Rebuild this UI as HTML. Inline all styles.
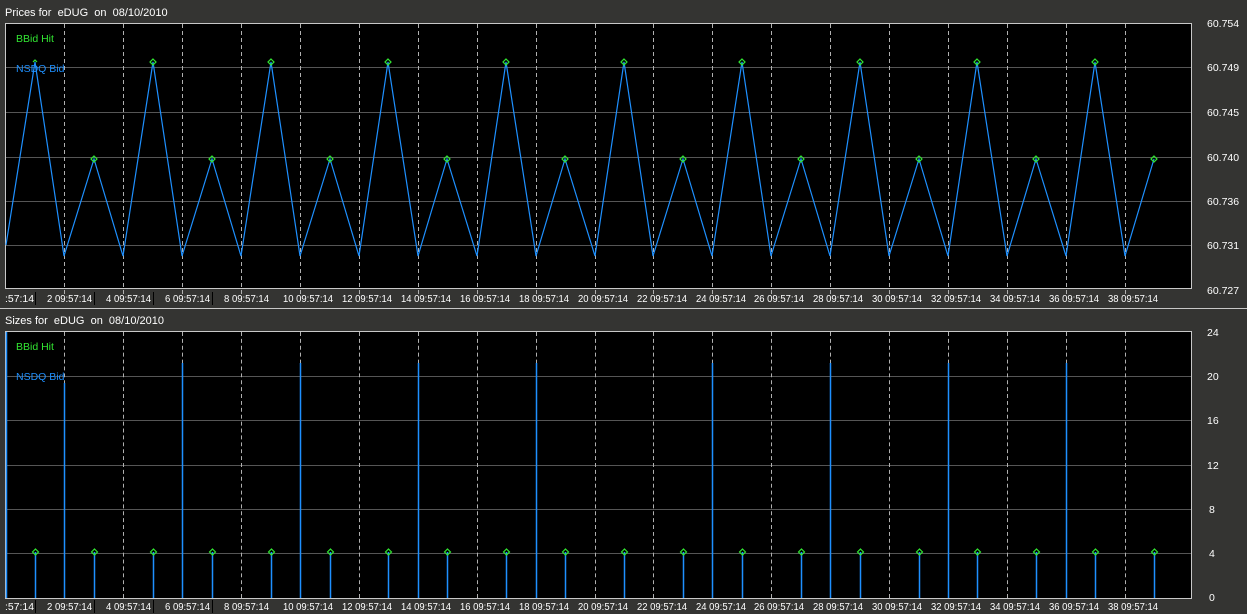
<!DOCTYPE html>
<html><head><meta charset="utf-8"><style>
html,body{margin:0;padding:0;background:#343432;}
svg{display:block;font-family:"Liberation Sans",sans-serif;}
text{white-space:pre;}
</style></head><body>
<svg width="1247" height="614" viewBox="0 0 1247 614" xmlns="http://www.w3.org/2000/svg" xml:space="preserve">
<defs>
<g id="vg" stroke="#b0b0b0" stroke-width="1" stroke-dasharray="4,3">
<line x1="64.5" y1="0" x2="64.5" y2="270"/><line x1="123.5" y1="0" x2="123.5" y2="270"/><line x1="182.5" y1="0" x2="182.5" y2="270"/><line x1="241.5" y1="0" x2="241.5" y2="270"/><line x1="300.5" y1="0" x2="300.5" y2="270"/><line x1="359.5" y1="0" x2="359.5" y2="270"/><line x1="418.5" y1="0" x2="418.5" y2="270"/><line x1="477.5" y1="0" x2="477.5" y2="270"/><line x1="536.5" y1="0" x2="536.5" y2="270"/><line x1="595.5" y1="0" x2="595.5" y2="270"/><line x1="653.5" y1="0" x2="653.5" y2="270"/><line x1="712.5" y1="0" x2="712.5" y2="270"/><line x1="771.5" y1="0" x2="771.5" y2="270"/><line x1="830.5" y1="0" x2="830.5" y2="270"/><line x1="889.5" y1="0" x2="889.5" y2="270"/><line x1="948.5" y1="0" x2="948.5" y2="270"/><line x1="1007.5" y1="0" x2="1007.5" y2="270"/><line x1="1066.5" y1="0" x2="1066.5" y2="270"/><line x1="1125.5" y1="0" x2="1125.5" y2="270"/>
</g>
<g id="xl" fill="#fff" font-size="10">
<text x="5" y="0" textLength="29" lengthAdjust="spacingAndGlyphs">:57:14</text><text x="47" y="0" textLength="45" lengthAdjust="spacingAndGlyphs">2 09:57:14</text><text x="106" y="0" textLength="45" lengthAdjust="spacingAndGlyphs">4 09:57:14</text><text x="165" y="0" textLength="45" lengthAdjust="spacingAndGlyphs">6 09:57:14</text><text x="224" y="0" textLength="45" lengthAdjust="spacingAndGlyphs">8 09:57:14</text><text x="283" y="0" textLength="50" lengthAdjust="spacingAndGlyphs">10 09:57:14</text><text x="342" y="0" textLength="50" lengthAdjust="spacingAndGlyphs">12 09:57:14</text><text x="401" y="0" textLength="50" lengthAdjust="spacingAndGlyphs">14 09:57:14</text><text x="460" y="0" textLength="50" lengthAdjust="spacingAndGlyphs">16 09:57:14</text><text x="519" y="0" textLength="50" lengthAdjust="spacingAndGlyphs">18 09:57:14</text><text x="578" y="0" textLength="50" lengthAdjust="spacingAndGlyphs">20 09:57:14</text><text x="637" y="0" textLength="50" lengthAdjust="spacingAndGlyphs">22 09:57:14</text><text x="696" y="0" textLength="50" lengthAdjust="spacingAndGlyphs">24 09:57:14</text><text x="754" y="0" textLength="50" lengthAdjust="spacingAndGlyphs">26 09:57:14</text><text x="813" y="0" textLength="50" lengthAdjust="spacingAndGlyphs">28 09:57:14</text><text x="872" y="0" textLength="50" lengthAdjust="spacingAndGlyphs">30 09:57:14</text><text x="931" y="0" textLength="50" lengthAdjust="spacingAndGlyphs">32 09:57:14</text><text x="990" y="0" textLength="50" lengthAdjust="spacingAndGlyphs">34 09:57:14</text><text x="1049" y="0" textLength="50" lengthAdjust="spacingAndGlyphs">36 09:57:14</text><text x="1108" y="0" textLength="50" lengthAdjust="spacingAndGlyphs">38 09:57:14</text>
</g>
</defs>
<rect width="1247" height="614" fill="#343432"/>
<!-- top panel -->
<text x="5" y="16" fill="#fff" font-size="11">Prices for  eDUG  on  08/10/2010</text>
<rect x="5.5" y="23.5" width="1186" height="265" fill="#000" stroke="#c8c8c8"/>
<g stroke="#555" stroke-width="1">
<line x1="6" y1="67.5" x2="1191" y2="67.5"/><line x1="6" y1="112.5" x2="1191" y2="112.5"/><line x1="6" y1="157.5" x2="1191" y2="157.5"/><line x1="6" y1="201.5" x2="1191" y2="201.5"/><line x1="6" y1="245.5" x2="1191" y2="245.5"/>
</g>
<use href="#vg" transform="translate(0,24)"/>
<polyline fill="none" stroke="#1e90ff" stroke-width="1.2" points="6,245 35,62 64,256 94,159 123,256 153,62 182,256 212,159 241,256 271,62 300,256 330,159 359,256 388,62 418,256 447,159 477,256 506,62 536,256 565,159 595,256 624,62 653,256 683,159 712,256 742,62 771,256 801,159 830,256 860,62 889,256 919,159 948,256 977,62 1007,256 1036,159 1066,256 1095,62 1125,256 1154,159"/>
<g fill="none" stroke="#32e632" stroke-width="1.2">
<polygon points="94,156 97,159 94,162 91,159"/><polygon points="153,59 156,62 153,65 150,62"/><polygon points="212,156 215,159 212,162 209,159"/><polygon points="271,59 274,62 271,65 268,62"/><polygon points="330,156 333,159 330,162 327,159"/><polygon points="388,59 391,62 388,65 385,62"/><polygon points="447,156 450,159 447,162 444,159"/><polygon points="506,59 509,62 506,65 503,62"/><polygon points="565,156 568,159 565,162 562,159"/><polygon points="624,59 627,62 624,65 621,62"/><polygon points="683,156 686,159 683,162 680,159"/><polygon points="742,59 745,62 742,65 739,62"/><polygon points="801,156 804,159 801,162 798,159"/><polygon points="860,59 863,62 860,65 857,62"/><polygon points="919,156 922,159 919,162 916,159"/><polygon points="977,59 980,62 977,65 974,62"/><polygon points="1036,156 1039,159 1036,162 1033,159"/><polygon points="1095,59 1098,62 1095,65 1092,62"/><polygon points="1154,156 1157,159 1154,162 1151,159"/>
<polyline points="33,62 35,60 37,62"/>
</g>
<text x="16" y="42" fill="#32e632" font-size="10.5">BBid Hit</text>
<text x="16" y="72" fill="#1e90ff" font-size="10.5">NSDQ Bid</text>
<g fill="#fff" font-size="10.5">
<text x="1207" y="27">60.754</text><text x="1207" y="71">60.749</text><text x="1207" y="116">60.745</text><text x="1207" y="161">60.740</text><text x="1207" y="205">60.736</text><text x="1207" y="249">60.731</text><text x="1207" y="294">60.727</text>
</g>
<use href="#xl" transform="translate(0,302)"/>
<g stroke="#000"><line x1="35.5" y1="292" x2="35.5" y2="305"/><line x1="94.5" y1="292" x2="94.5" y2="305"/><line x1="153.5" y1="292" x2="153.5" y2="305"/><line x1="212.5" y1="292" x2="212.5" y2="305"/></g>
<line x1="0" y1="308.5" x2="1247" y2="308.5" stroke="#c8c8c8"/>
<!-- bottom panel -->
<text x="5" y="324" fill="#fff" font-size="11">Sizes for  eDUG  on  08/10/2010</text>
<rect x="5.5" y="331.5" width="1186" height="267" fill="#000" stroke="#c8c8c8"/>
<g stroke="#555" stroke-width="1">
<line x1="6" y1="376.5" x2="1191" y2="376.5"/><line x1="6" y1="420.5" x2="1191" y2="420.5"/><line x1="6" y1="465.5" x2="1191" y2="465.5"/><line x1="6" y1="509.5" x2="1191" y2="509.5"/><line x1="6" y1="553.5" x2="1191" y2="553.5"/>
</g>
<use href="#vg" transform="translate(0,332) scale(1,0.985)"/>
<g stroke="#1e90ff" stroke-width="1.5">
<line x1="6.5" y1="332" x2="6.5" y2="598"/><line x1="64.5" y1="383" x2="64.5" y2="598"/><line x1="182.5" y1="363" x2="182.5" y2="598"/><line x1="300.5" y1="363" x2="300.5" y2="598"/><line x1="418.5" y1="363" x2="418.5" y2="598"/><line x1="536.5" y1="363" x2="536.5" y2="598"/><line x1="712.5" y1="363" x2="712.5" y2="598"/><line x1="830.5" y1="363" x2="830.5" y2="598"/><line x1="948.5" y1="363" x2="948.5" y2="598"/><line x1="1066.5" y1="363" x2="1066.5" y2="598"/>
<line x1="35.5" y1="552" x2="35.5" y2="598"/><line x1="94.5" y1="552" x2="94.5" y2="598"/><line x1="153.5" y1="552" x2="153.5" y2="598"/><line x1="212.5" y1="552" x2="212.5" y2="598"/><line x1="271.5" y1="552" x2="271.5" y2="598"/><line x1="330.5" y1="552" x2="330.5" y2="598"/><line x1="388.5" y1="552" x2="388.5" y2="598"/><line x1="447.5" y1="552" x2="447.5" y2="598"/><line x1="506.5" y1="552" x2="506.5" y2="598"/><line x1="565.5" y1="552" x2="565.5" y2="598"/><line x1="624.5" y1="552" x2="624.5" y2="598"/><line x1="683.5" y1="552" x2="683.5" y2="598"/><line x1="742.5" y1="552" x2="742.5" y2="598"/><line x1="801.5" y1="552" x2="801.5" y2="598"/><line x1="860.5" y1="552" x2="860.5" y2="598"/><line x1="919.5" y1="552" x2="919.5" y2="598"/><line x1="977.5" y1="552" x2="977.5" y2="598"/><line x1="1036.5" y1="552" x2="1036.5" y2="598"/><line x1="1095.5" y1="552" x2="1095.5" y2="598"/><line x1="1154.5" y1="552" x2="1154.5" y2="598"/>
</g>
<g fill="none" stroke="#32e632" stroke-width="1.2">
<polygon points="35.5,549 38.5,552 35.5,555 32.5,552"/><polygon points="94.5,549 97.5,552 94.5,555 91.5,552"/><polygon points="153.5,549 156.5,552 153.5,555 150.5,552"/><polygon points="212.5,549 215.5,552 212.5,555 209.5,552"/><polygon points="271.5,549 274.5,552 271.5,555 268.5,552"/><polygon points="330.5,549 333.5,552 330.5,555 327.5,552"/><polygon points="388.5,549 391.5,552 388.5,555 385.5,552"/><polygon points="447.5,549 450.5,552 447.5,555 444.5,552"/><polygon points="506.5,549 509.5,552 506.5,555 503.5,552"/><polygon points="565.5,549 568.5,552 565.5,555 562.5,552"/><polygon points="624.5,549 627.5,552 624.5,555 621.5,552"/><polygon points="683.5,549 686.5,552 683.5,555 680.5,552"/><polygon points="742.5,549 745.5,552 742.5,555 739.5,552"/><polygon points="801.5,549 804.5,552 801.5,555 798.5,552"/><polygon points="860.5,549 863.5,552 860.5,555 857.5,552"/><polygon points="919.5,549 922.5,552 919.5,555 916.5,552"/><polygon points="977.5,549 980.5,552 977.5,555 974.5,552"/><polygon points="1036.5,549 1039.5,552 1036.5,555 1033.5,552"/><polygon points="1095.5,549 1098.5,552 1095.5,555 1092.5,552"/><polygon points="1154.5,549 1157.5,552 1154.5,555 1151.5,552"/>
</g>
<text x="16" y="350" fill="#32e632" font-size="10.5">BBid Hit</text>
<text x="16" y="380" fill="#1e90ff" font-size="10.5">NSDQ Bid</text>
<g fill="#fff" font-size="10.5">
<text x="1207" y="336">24</text><text x="1207" y="380">20</text><text x="1207" y="424">16</text><text x="1207" y="469">12</text><text x="1209" y="513">8</text><text x="1209" y="557">4</text><text x="1209" y="601">0</text>
</g>
<use href="#xl" transform="translate(0,610)"/>
<g stroke="#000"><line x1="35.5" y1="600" x2="35.5" y2="613"/><line x1="94.5" y1="600" x2="94.5" y2="613"/><line x1="153.5" y1="600" x2="153.5" y2="613"/><line x1="212.5" y1="600" x2="212.5" y2="613"/></g>
</svg>
</body></html>
